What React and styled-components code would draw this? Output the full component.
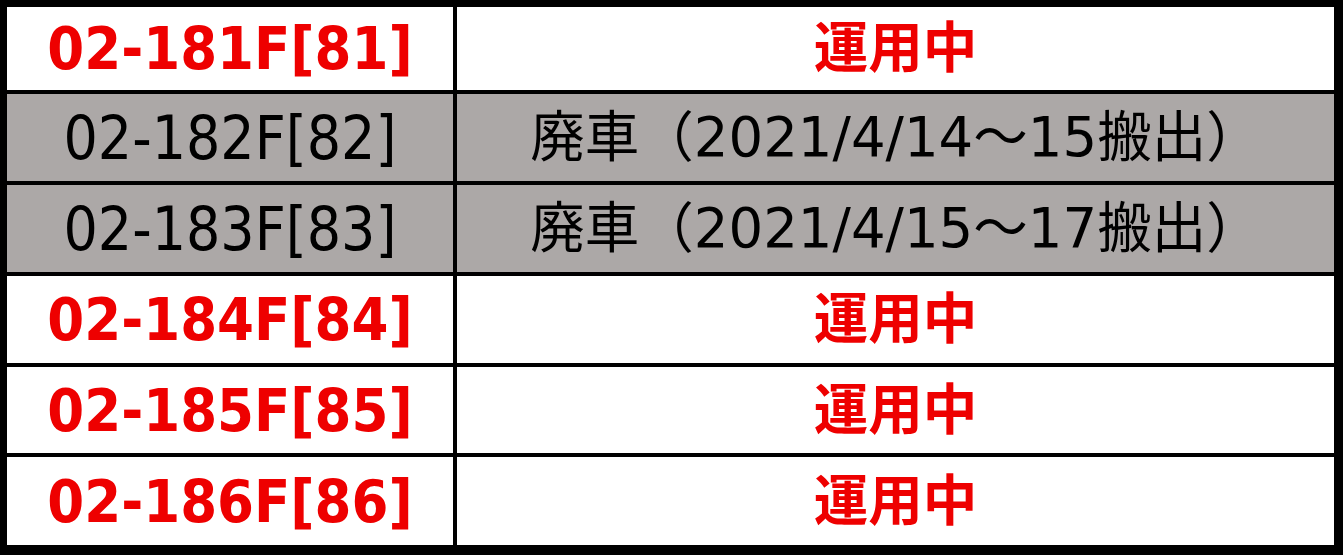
import { Fragment } from 'react';
import styled, { createGlobalStyle } from 'styled-components';

const GlobalStyle = createGlobalStyle`
  html, body {
    margin: 0;
    padding: 0;
    background: #ffffff;
  }
`;

const Table = styled.div`
  display: grid;
  grid-template-columns: 446px 877px;
  grid-template-rows: 83px 87px 87px 87px 86px 88px;
  gap: 4px;
  width: 1343px;
  height: 555px;
  box-sizing: border-box;
  padding: 7px 9px 10px 7px;
  background: #000000;
`;

const Cell = styled.div`
  display: flex;
  align-items: center;
  justify-content: center;
  background: ${({ $scrapped }) => ($scrapped ? '#aca8a7' : '#ffffff')};
  color: ${({ $scrapped }) => ($scrapped ? '#000000' : '#ee0000')};
  font-weight: ${({ $scrapped }) => ($scrapped ? 400 : 700)};
  white-space: nowrap;
  line-height: 1;
`;

const IdCell = styled(Cell)`
  font-family: "DejaVu Sans Condensed", "DejaVu Sans", "Noto Sans CJK JP", sans-serif;
  font-stretch: condensed;
  font-size: ${({ $scrapped }) => ($scrapped ? '60px' : '59px')};
`;

const StatusCell = styled(Cell)`
  font-family: "DejaVu Sans", "Noto Sans CJK JP", sans-serif;
  font-size: 54.5px;
`;

const rows = [
  { id: '02-181F[81]', status: '運用中' },
  { id: '02-182F[82]', status: '廃車（2021/4/14～15搬出）', scrapped: true },
  { id: '02-183F[83]', status: '廃車（2021/4/15～17搬出）', scrapped: true },
  { id: '02-184F[84]', status: '運用中' },
  { id: '02-185F[85]', status: '運用中' },
  { id: '02-186F[86]', status: '運用中' },
];

export default function App() {
  return (
    <>
      <GlobalStyle />
      <Table>
        {rows.map((r) => (
          <Fragment key={r.id}>
            <IdCell $scrapped={r.scrapped}>{r.id}</IdCell>
            <StatusCell $scrapped={r.scrapped}>{r.status}</StatusCell>
          </Fragment>
        ))}
      </Table>
    </>
  );
}
